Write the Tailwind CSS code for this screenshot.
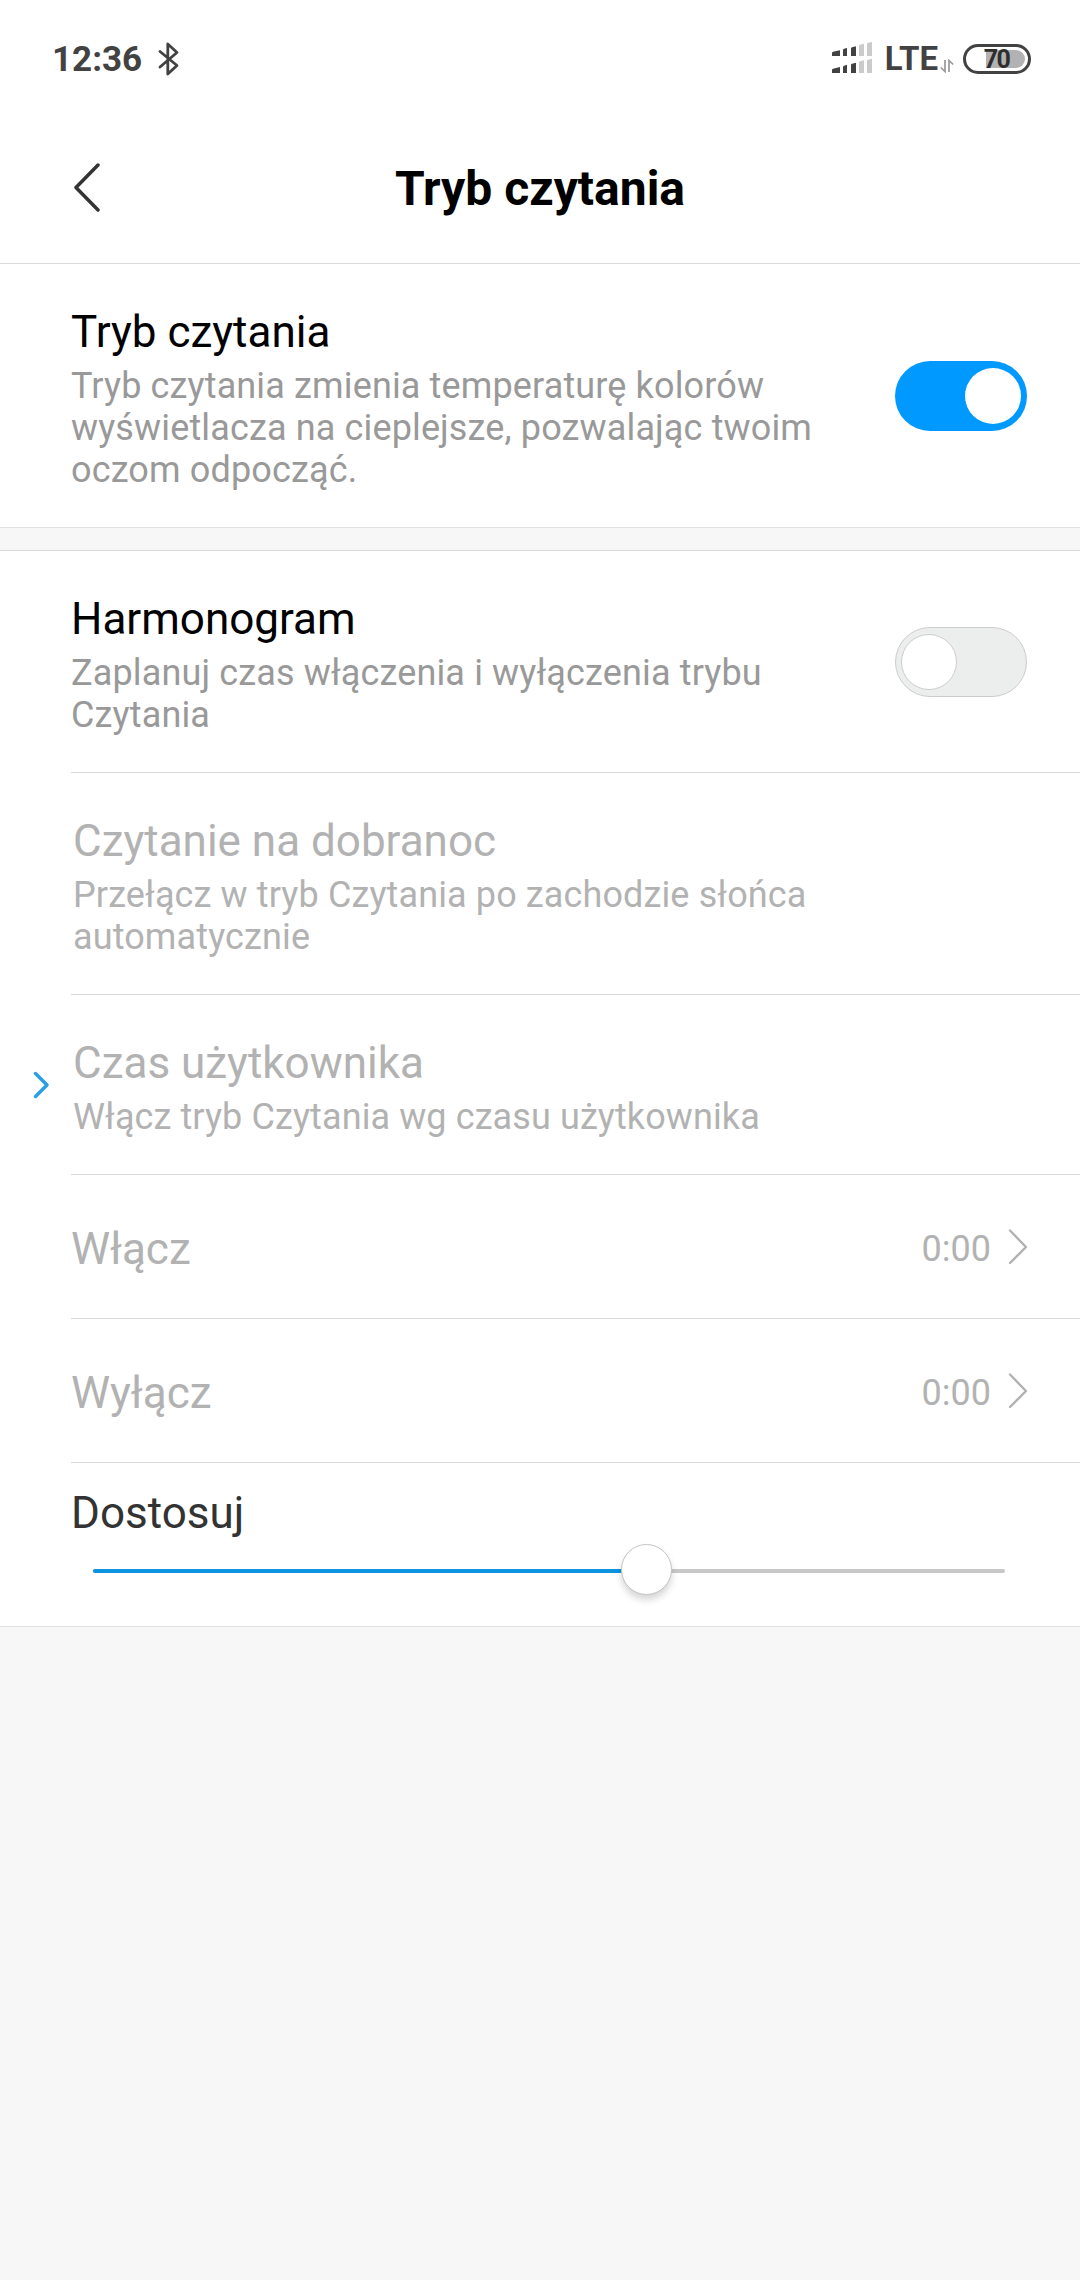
<!DOCTYPE html>
<html lang="pl">
<head>
    <meta charset="UTF-8">
    <meta name="viewport" content="width=device-width, initial-scale=1.0">
    <title>Tryb czytania</title>
    <!-- Tailwind CSS CDN -->
    <script src="https://cdn.jsdelivr.net/npm/@tailwindcss/browser@4"></script>
</head>
<body class="font-[Roboto,sans-serif] bg-[#f7f7f7] text-black w-[1080px] min-h-[2280px]">

    <!-- Status bar -->
    <div class="bg-white h-[118px] pl-[52px] pr-[49px] flex items-center justify-between text-[#424242]">
        <div class="flex items-center gap-[16px]">
            <span class="text-[35px] leading-[41px] font-bold">12:36</span>
            <svg class="w-[22px] h-[34px] -mt-[1px]" viewBox="0 0 22 34" fill="none" stroke="#424242" stroke-width="2.8" stroke-linecap="round" stroke-linejoin="round">
                <path d="M2 9.5L19 23.5L9.8 32V2L19 10.5L2 25"/>
            </svg>
        </div>
        <div class="flex items-center">
            <!-- Signal, two SIMs -->
            <svg class="w-[40px] h-[31px] -mt-[3px]" viewBox="0 0 40 31">
                <g fill="#424242">
                    <path d="M0 11q0-1 1-1.300L8 8.300V14H0zM11 8q0-1 1-1.300L15 6v8h-4zM19 6.500q0-1 1-1.300L24 4.200V14h-5z"/>
                    <path d="M0 28q0-1 1-1.300L8 25v6H0zM11 25q0-1 1-1.300L15 22.800V31h-4zM19 23q0-1 1-1.300L24 20.800V31h-5z"/>
                </g>
                <g fill="#cbcbcb">
                    <path d="M27 4q0-1 1-1.300L32 1.800V14h-5zM35 2q0-1 1-1.300L40 0v14h-5z"/>
                    <path d="M27 20.500q0-1 1-1.300L32 18.300V31h-5zM35 19q0-1 1-1.300L40 16.800V31h-5z"/>
                </g>
            </svg>
            <span class="ml-[13px] text-[33px] leading-[38px] font-bold">LTE</span>
            <svg class="w-[14px] h-[14px] mt-[13px] ml-[2px]" viewBox="0 0 14 14" fill="none" stroke="#999" stroke-width="1.700">
                <path d="M5 1v11.500L.8 8.500M9 13V1.500l4.200 4"/>
            </svg>
            <!-- Battery -->
            <div class="relative ml-[9px] w-[68px] h-[30px] rounded-full border-3 border-[#424242] p-[3px] flex justify-end">
                <div class="w-[39px] h-[18px] bg-[#b2b2b2] rounded-r-full"></div>
                <span class="absolute inset-x-0 top-0 -left-[1px] text-center text-[25px] leading-[25px] tracking-[-1.500px] font-bold text-[#2e2e2e]">70</span>
            </div>
        </div>
    </div>

    <!-- Header -->
    <header class="relative bg-white h-[146px] border-b border-[#d9d9d9] flex items-center justify-center">
        <svg class="absolute left-[72px] top-[44px] w-[30px] h-[50px]" viewBox="0 0 30 50" fill="none" stroke="#333" stroke-width="3.500" stroke-linecap="round" stroke-linejoin="round">
            <path d="M26 3L4 25.500L26 48"/>
        </svg>
        <h1 class="text-[48px] leading-[56px] pb-[3px] font-bold">Tryb czytania</h1>
    </header>

    <!-- Reading mode -->
    <section class="bg-white h-[264px] border-b border-[#e0e0e0] pl-[71px] pr-[53px] flex items-center justify-between">
        <div class="w-[760px] pt-[6px]">
            <h2 class="text-[44px] leading-[52px]">Tryb czytania</h2>
            <p class="mt-[7px] text-[36px] leading-[42px] tracking-[0.14px] text-[#999]">Tryb czytania zmienia temperaturę kolorów wyświetlacza na cieplejsze, pozwalając twoim oczom odpocząć.</p>
        </div>
        <div class="w-[132px] h-[70px] rounded-full bg-[#0099ff] pr-[6px] flex items-center justify-end">
            <div class="size-[56px] rounded-full bg-white"></div>
        </div>
    </section>

    <!-- Schedule -->
    <section class="mt-[22px] bg-white border-y border-t-[#d9d9d9] border-b-[#e0e0e0]">
        <div class="ml-[71px] h-[222px] pr-[53px] border-b border-[#d9d9d9] flex items-center justify-between">
            <div class="w-[720px] pt-[6px]">
                <h2 class="text-[44px] leading-[52px]">Harmonogram</h2>
                <p class="mt-[7px] text-[36px] leading-[42px] tracking-[0.14px] text-[#999]">Zaplanuj czas włączenia i wyłączenia trybu Czytania</p>
            </div>
            <div class="w-[132px] h-[70px] rounded-full bg-[#eceeed] border border-[#ccc] pl-[5px] flex items-center">
                <div class="size-[56px] rounded-full bg-white border border-[#ccc]"></div>
            </div>
        </div>

        <div class="ml-[71px] h-[222px] pl-[2px] border-b border-[#d9d9d9] flex items-center text-[#b2b2b2]">
            <div class="w-[780px] pt-[6px]">
                <h2 class="text-[44px] leading-[52px]">Czytanie na dobranoc</h2>
                <p class="mt-[7px] text-[36px] leading-[42px] tracking-[0.12px]">Przełącz w tryb Czytania po zachodzie słońca automatycznie</p>
            </div>
        </div>

        <div class="flex items-center">
            <div class="w-[71px] pl-[32px]">
                <svg class="w-[18px] h-[28px]" viewBox="0 0 18 28" fill="none" stroke="#2b9fe6" stroke-width="3.500" stroke-linecap="round" stroke-linejoin="round">
                    <path d="M3.500 2.500L15 14L3.500 25.500"/>
                </svg>
            </div>
            <div class="flex-1 h-[180px] pl-[2px] border-b border-[#d9d9d9] flex items-center text-[#b2b2b2]">
                <div class="pt-[6px]">
                    <h2 class="text-[44px] leading-[52px]">Czas użytkownika</h2>
                    <p class="mt-[7px] text-[36px] leading-[42px] tracking-[0.1px]">Włącz tryb Czytania wg czasu użytkownika</p>
                </div>
            </div>
        </div>

        <div class="ml-[71px] h-[144px] pr-[52px] border-b border-[#d9d9d9] flex items-center justify-between text-[#b2b2b2]">
            <h2 class="text-[44px] leading-[52px] pt-[4px]">Włącz</h2>
            <div class="flex items-center gap-[16px]">
                <span class="text-[36px] leading-[42px] pt-[5px]">0:00</span>
                <svg class="w-[21px] h-[36px]" viewBox="0 0 21 36" fill="none" stroke="#b2b2b2" stroke-width="2.400" stroke-linecap="round" stroke-linejoin="round">
                    <path d="M3 1.500L19 18L3 34"/>
                </svg>
            </div>
        </div>

        <div class="ml-[71px] h-[144px] pr-[52px] border-b border-[#d9d9d9] flex items-center justify-between text-[#b2b2b2]">
            <h2 class="text-[44px] leading-[52px] pt-[4px]">Wyłącz</h2>
            <div class="flex items-center gap-[16px]">
                <span class="text-[36px] leading-[42px] pt-[5px]">0:00</span>
                <svg class="w-[21px] h-[36px]" viewBox="0 0 21 36" fill="none" stroke="#b2b2b2" stroke-width="2.400" stroke-linecap="round" stroke-linejoin="round">
                    <path d="M3 1.500L19 18L3 34"/>
                </svg>
            </div>
        </div>

        <!-- Colour temperature slider -->
        <div class="h-[163px] pt-[24px] pl-[71px] pr-[75px]">
            <h2 class="text-[44px] leading-[52px] text-[#333]">Dostosuj</h2>
            <div class="relative ml-[22px] mt-[30px] h-[4px] rounded-full bg-[#c8c8c8]">
                <div class="w-[553px] h-full rounded-full bg-[#0d93df]"></div>
                <div class="absolute left-[528px] -top-[25px] size-[51px] rounded-full bg-white border border-[#c4c4c4] shadow-[0_5px_7px_rgba(0,0,0,0.16)]"></div>
            </div>
        </div>
    </section>

</body>
</html>
